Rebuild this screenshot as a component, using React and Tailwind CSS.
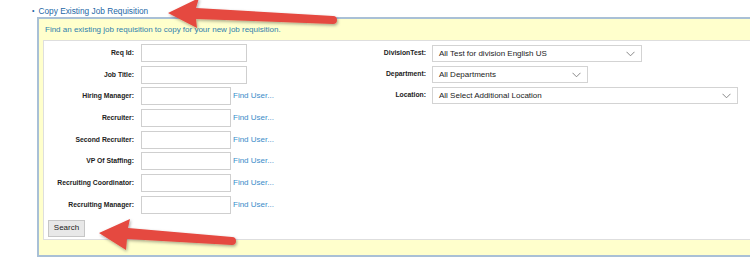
import React from "react";

const leftRows = [
  { label: "Req Id:", wide: true },
  { label: "Job Title:", wide: true },
  { label: "Hiring Manager:", find: true },
  { label: "Recruiter:", find: true },
  { label: "Second Recruiter:", find: true },
  { label: "VP Of Staffing:", find: true },
  { label: "Recruiting Coordinator:", find: true },
  { label: "Recruiting Manager:", find: true },
];

const rightRows = [
  { label: "DivisionTest:", value: "All Test for division English US", w: "w-[210px]" },
  { label: "Department:", value: "All Departments", w: "w-[156px]" },
  { label: "Location:", value: "All Select Additional Location", w: "w-[306px]" },
];

function Chevron() {
  return (
    <svg width="9" height="6" viewBox="0 0 9 6" className="shrink-0">
      <path d="M0.5 0.8 L4.5 4.8 L8.5 0.8" fill="none" stroke="#7a7a7a" strokeWidth="0.9" />
    </svg>
  );
}

function Arrows() {
  return (
    <svg
      width="750"
      height="260"
      viewBox="0 0 750 260"
      className="absolute left-0 top-0 pointer-events-none"
    >
      <defs>
        <filter id="sh" x="-20%" y="-50%" width="140%" height="200%">
          <feDropShadow dx="1" dy="1.5" stdDeviation="1.4" floodColor="#000" floodOpacity="0.35" />
        </filter>
      </defs>
      <path
        d="M168 13 L199 -2 L196 8 L333 16 A4 4 0 0 1 333 24 L196 19 L197 28 Z"
        fill="#e5483f"
        filter="url(#sh)"
      />
      <path
        d="M99 233 L130 219 L128 228 L232 237 A4 4 0 0 1 232 245 L127 239 L126 250 Z"
        fill="#e5483f"
        filter="url(#sh)"
      />
    </svg>
  );
}

export default function App() {
  return (
    <div
      className="relative w-[750px] h-[260px] bg-white overflow-hidden"
      style={{ fontFamily: '"Liberation Sans", Arial, sans-serif' }}
    >
      <div className="flex items-center h-[17px] pl-[32px] pt-[5px] text-[8.3px] text-[#2467a6]">
        <span className="text-[7px] mr-[4px] text-[#2467a6]">•</span>
        <span>Copy Existing Job Requisition</span>
      </div>

      <div className="ml-[37px] w-[740px] h-[240px] bg-[#ffffcc] border-t-2 border-l-2 border-b-2 border-[#a9c0d6] pl-[4px]">
        <div className="h-[21px] flex items-center pl-[2px] text-[8px] text-[#2f80ad]">
          Find an existing job requisition to copy for your new job requisition.
        </div>

        <div className="h-[200px] bg-white border border-[#dedede] flex flex-col pt-[3px] pl-[4px]">
          <div className="flex">
            <div className="w-[286px] flex flex-col gap-[3.7px]">
              {leftRows.map((r) => (
                <div key={r.label} className="flex items-center h-[18px]">
                  <div className="w-[86px] text-right text-[6.8px] font-bold text-[#222]">{r.label}</div>
                  <div
                    className={`ml-[7px] h-[18px] bg-white border border-[#cfcfcf] ${r.wide ? "w-[106px]" : "w-[90px]"}`}
                  />
                  {r.find && (
                    <span className="ml-[2px] text-[8px] text-[#3b8cc9]">Find User...</span>
                  )}
                </div>
              ))}
            </div>

            <div className="flex flex-col gap-[4px] pt-[1px]">
              {rightRows.map((r) => (
                <div key={r.label} className="flex items-center h-[17px]">
                  <div className="w-[92px] text-right text-[6.8px] font-bold text-[#222]">{r.label}</div>
                  <div
                    className={`ml-[6px] h-[17px] ${r.w} bg-white border border-[#d3d3d3] flex items-center justify-between pl-[6px] pr-[6px]`}
                  >
                    <span className="text-[8px] text-[#222]">{r.value}</span>
                    <Chevron />
                  </div>
                </div>
              ))}
            </div>
          </div>

          <div className="mt-[6px]">
            <button className="w-[37px] h-[17px] bg-[#e8e8e8] border border-[#c6c6c6] text-[8px] text-[#222] flex items-center justify-center">
              Search
            </button>
          </div>
        </div>
      </div>

      <Arrows />
    </div>
  );
}
